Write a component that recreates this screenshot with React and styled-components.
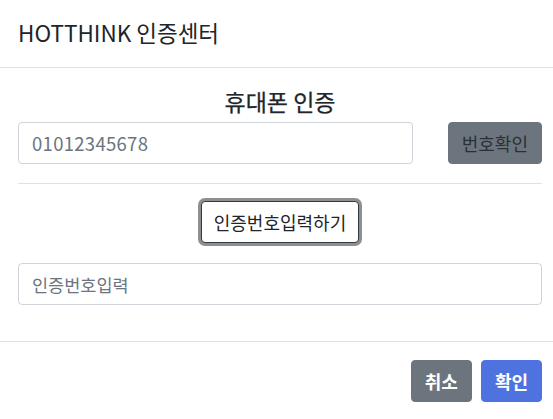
import React from "react";
import styled, { createGlobalStyle } from "styled-components";

const Global = createGlobalStyle`
  html, body { margin: 0; padding: 0; background: #fff; }
  body { font-family: "Noto Sans CJK KR", "Noto Sans", sans-serif; color: #212529; }
  * { box-sizing: border-box; }
`;

const Modal = styled.div`
  width: 553px;
  height: 419px;
  background: #fff;
  display: flex;
  flex-direction: column;
  overflow: hidden;
`;

const Header = styled.div`
  height: 68px;
  padding: 0 18px 2px;
  display: flex;
  align-items: center;
  border-bottom: 1px solid #dee2e6;
`;

const Title = styled.h5`
  margin: 0;
  font-size: 22.5px;
  font-weight: 400;
  line-height: 1.5;
  color: #212529;
`;

const Body = styled.div`
  padding: 18px 11px 18px 18px;
  display: flex;
  flex-direction: column;
  flex: 1;
`;

const Heading = styled.div`
  height: 33px;
  line-height: 31px;
  margin-bottom: 3px;
  text-align: center;
  font-size: 23px;
  font-weight: 400;
  color: #212529;
  -webkit-text-stroke: 0.25px #212529;
`;

const Row = styled.div`
  display: flex;
  align-items: center;
  gap: 35px;
`;

const Input = styled.input`
  display: block;
  flex: 1;
  width: 100%;
  height: 42px;
  padding: 0 13px;
  font-family: inherit;
  font-size: ${(p) => (p.$digits ? "18.5px" : "17.5px")};
  letter-spacing: ${(p) => (p.$digits ? "0.3px" : "0")};
  color: #6c757d;
  background: #fff;
  border: 1px solid #ced4da;
  border-radius: 4px;
  outline: none;
  &::placeholder { color: #6c757d; opacity: 1; }
`;

const Btn = styled.button`
  height: 42px;
  padding: 0 ${(p) => p.$px || 13}px;
  font-family: inherit;
  font-size: 18px;
  font-weight: ${(p) => p.$weight || 400};
  line-height: 1;
  border-radius: 4px;
  border: 1px solid ${(p) => p.$border};
  background: ${(p) => p.$bg};
  color: ${(p) => p.$color};
  box-shadow: ${(p) => p.$ring || "none"};
  cursor: pointer;
  white-space: nowrap;
`;

const Divider = styled.hr`
  margin: 19px 0 17px;
  border: 0;
  border-top: 1px solid #dee2e6;
  height: 0;
`;

const Center = styled.div`
  display: flex;
  justify-content: center;
  margin-bottom: 20px;
`;

const Footer = styled.div`
  border-top: 1px solid #dee2e6;
  padding: 18px 11px 17px 18px;
  display: flex;
  justify-content: flex-end;
  gap: 9px;
`;

export default function App() {
  return (
    <>
      <Global />
      <Modal>
        <Header>
          <Title>HOTTHINK 인증센터</Title>
        </Header>
        <Body>
          <Heading>휴대폰 인증</Heading>
          <Row>
            <Input $digits placeholder="01012345678" />
            <Btn $bg="#6c757d" $border="#6c757d" $color="#2b3035" $px={13}>
              번호확인
            </Btn>
          </Row>
          <Divider />
          <Center>
            <Btn
              $bg="#fff"
              $border="#343a40"
              $color="#212529"
              $px={12}
              $ring="0 0 0 3px rgba(120,124,128,0.85)"
            >
              인증번호입력하기
            </Btn>
          </Center>
          <Row>
            <Input placeholder="인증번호입력" />
          </Row>
        </Body>
        <Footer>
          <Btn $bg="#6c757d" $border="#6c757d" $color="#fff" $weight={700} $px={13}>
            취소
          </Btn>
          <Btn $bg="#4e73df" $border="#4e73df" $color="#fff" $weight={700} $px={13}>
            확인
          </Btn>
        </Footer>
      </Modal>
    </>
  );
}
